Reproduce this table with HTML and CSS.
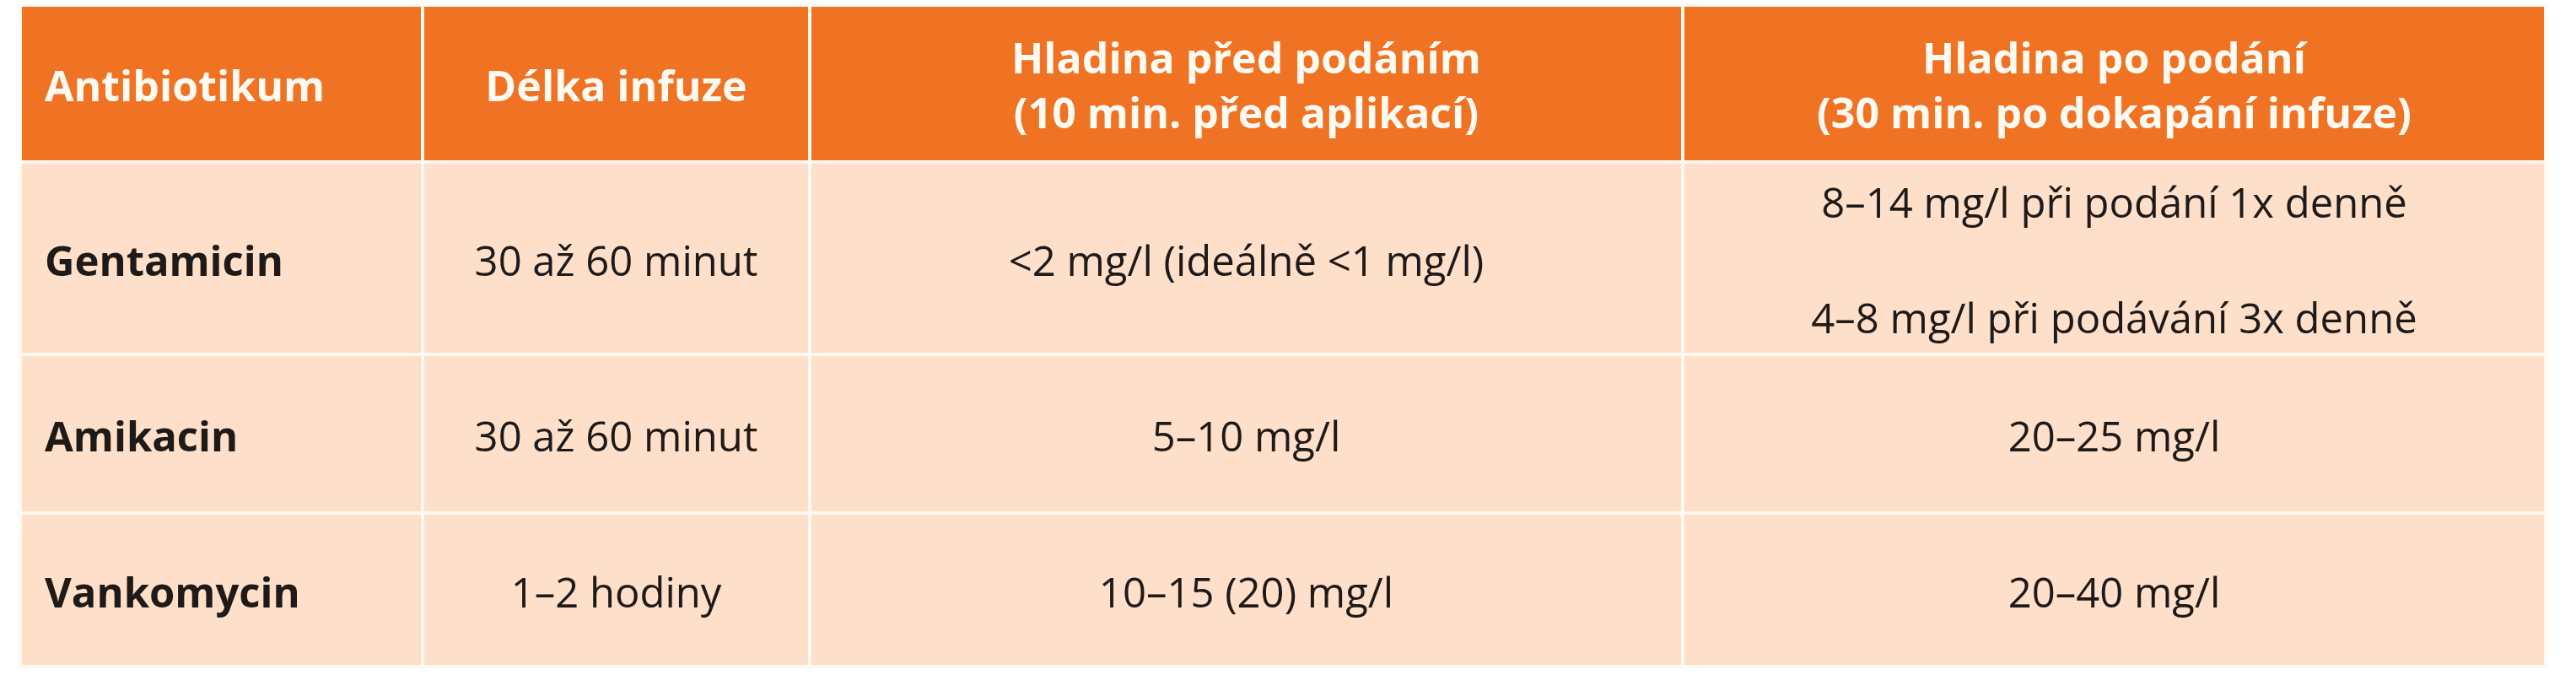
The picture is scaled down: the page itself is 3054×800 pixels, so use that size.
FILE: index.html
```html
<!DOCTYPE html>
<html lang="cs">
<head>
<meta charset="utf-8">
<title>Hladiny antibiotik</title>
<link rel="stylesheet" href="styles.css">
</head>
<body>
<table class="levels">
  <colgroup>
    <col class="c-name">
    <col class="c-dur">
    <col class="c-pre">
    <col class="c-post">
  </colgroup>
  <thead>
    <tr class="r-head">
      <th class="left">Antibiotikum</th>
      <th>Délka infuze</th>
      <th>Hladina před podáním<br>(10 min. před aplikací)</th>
      <th>Hladina po podání<br>(30 min. po dokapání infuze)</th>
    </tr>
  </thead>
  <tbody>
    <tr class="r-1">
      <td class="left name">Gentamicin</td>
      <td>30 až 60 minut</td>
      <td>&lt;2 mg/l (ideálně &lt;1 mg/l)</td>
      <td><p class="gap">8–14 mg/l při podání 1x denně</p><p>4–8 mg/l při podávání 3x denně</p></td>
    </tr>
    <tr class="r-2">
      <td class="left name">Amikacin</td>
      <td>30 až 60 minut</td>
      <td>5–10 mg/l</td>
      <td>20–25 mg/l</td>
    </tr>
    <tr class="r-3">
      <td class="left name">Vankomycin</td>
      <td>1–2 hodiny</td>
      <td>10–15 (20) mg/l</td>
      <td>20–40 mg/l</td>
    </tr>
  </tbody>
</table>
</body>
</html>
```

FILE: styles.css
```css
html, body {
  margin: 0;
  padding: 0;
  background: #ffffff;
}

body {
  font-family: "Open Sans", "Noto Sans", sans-serif;
  font-size: 49px;
  color: #1f1a17;
}

.levels {
  table-layout: fixed;
  border-collapse: separate;
  border-spacing: 4px;
  width: 2998px;
  margin: 4px 0 0 22px;
  background: #fff9f1;
}

.c-name { width: 473px; }
.c-dur { width: 455px; }
.c-pre { width: 1031px; }
.c-post { width: 1019px; }

.levels th,
.levels td {
  padding: 0;
  vertical-align: middle;
  text-align: center;
}

.levels th {
  background: #f07223;
  color: #fffaf2;
  font-size: 50px;
  font-weight: 700;
  line-height: 65px;
  padding-top: 4px;
}

.levels td {
  background: #fddfca;
  font-weight: 400;
  line-height: 68.5px;
  padding-top: 4px;
}

.levels .left {
  text-align: left;
  padding-left: 27px;
}

.levels .name {
  font-weight: 700;
}

.r-head { height: 182px; }
.r-1 { height: 224px; }
.r-2 { height: 184px; }
.r-3 { height: 178px; }

.levels p {
  margin: 0;
}

.levels p.gap {
  margin-bottom: 68.5px;
}
```
